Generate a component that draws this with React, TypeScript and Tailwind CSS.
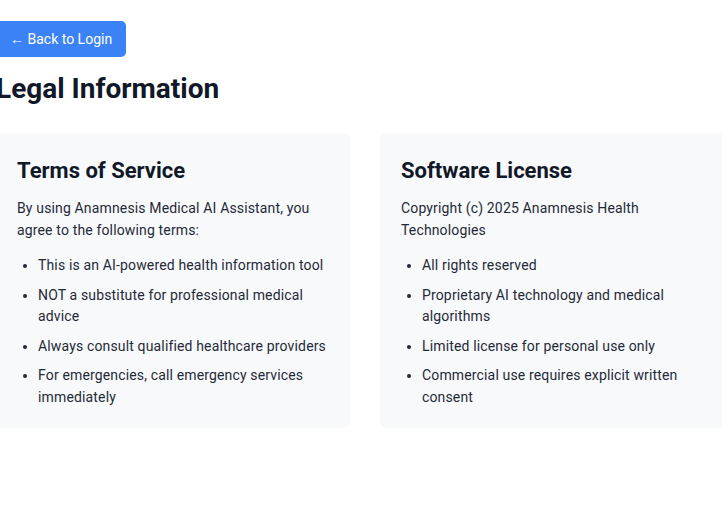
export default function App() {
  const terms = [
    "This is an AI-powered health information tool",
    "NOT a substitute for professional medical advice",
    "Always consult qualified healthcare providers",
    "For emergencies, call emergency services immediately",
  ];
  const license = [
    "All rights reserved",
    "Proprietary AI technology and medical algorithms",
    "Limited license for personal use only",
    "Commercial use requires explicit written consent",
  ];

  return (
    <div className="min-h-[515px] overflow-hidden bg-white font-['Roboto',sans-serif] text-[#1f2937]">
      <div className="-ml-1 w-[738px] pt-[21px]">
        <button className="h-9 rounded-[5px] bg-[#3b82f6] px-[14px] text-[14px] text-white">
          ← Back to Login
        </button>
        <h1 className="mt-[14px] text-[28px] font-bold leading-[36px] text-[#111827]">Legal Information</h1>
        <div className="mt-[26px] grid grid-cols-2 gap-[30px]">
          <Card
            title="Terms of Service"
            intro="By using Anamnesis Medical AI Assistant, you agree to the following terms:"
            items={terms}
          />
          <Card
            title="Software License"
            intro="Copyright (c) 2025 Anamnesis Health Technologies"
            items={license}
          />
        </div>
      </div>
    </div>
  );
}

function Card({ title, intro, items }: { title: string; intro: string; items: string[] }) {
  return (
    <div className="rounded-[6px] bg-[#f8f9fb] px-[21px] pt-[23px] pb-[20px] tracking-[0.15px]">
      <h2 className="text-[22px] font-bold leading-[30px] tracking-normal text-[#111827]">{title}</h2>
      <p className="mt-[11px] text-[14px] leading-[22px]">{intro}</p>
      <ul className="mt-[14px] list-disc pl-[21px] text-[14px] leading-[21.5px]">
        {items.map((item) => (
          <li key={item} className="mb-2 last:mb-0">
            {item}
          </li>
        ))}
      </ul>
    </div>
  );
}
